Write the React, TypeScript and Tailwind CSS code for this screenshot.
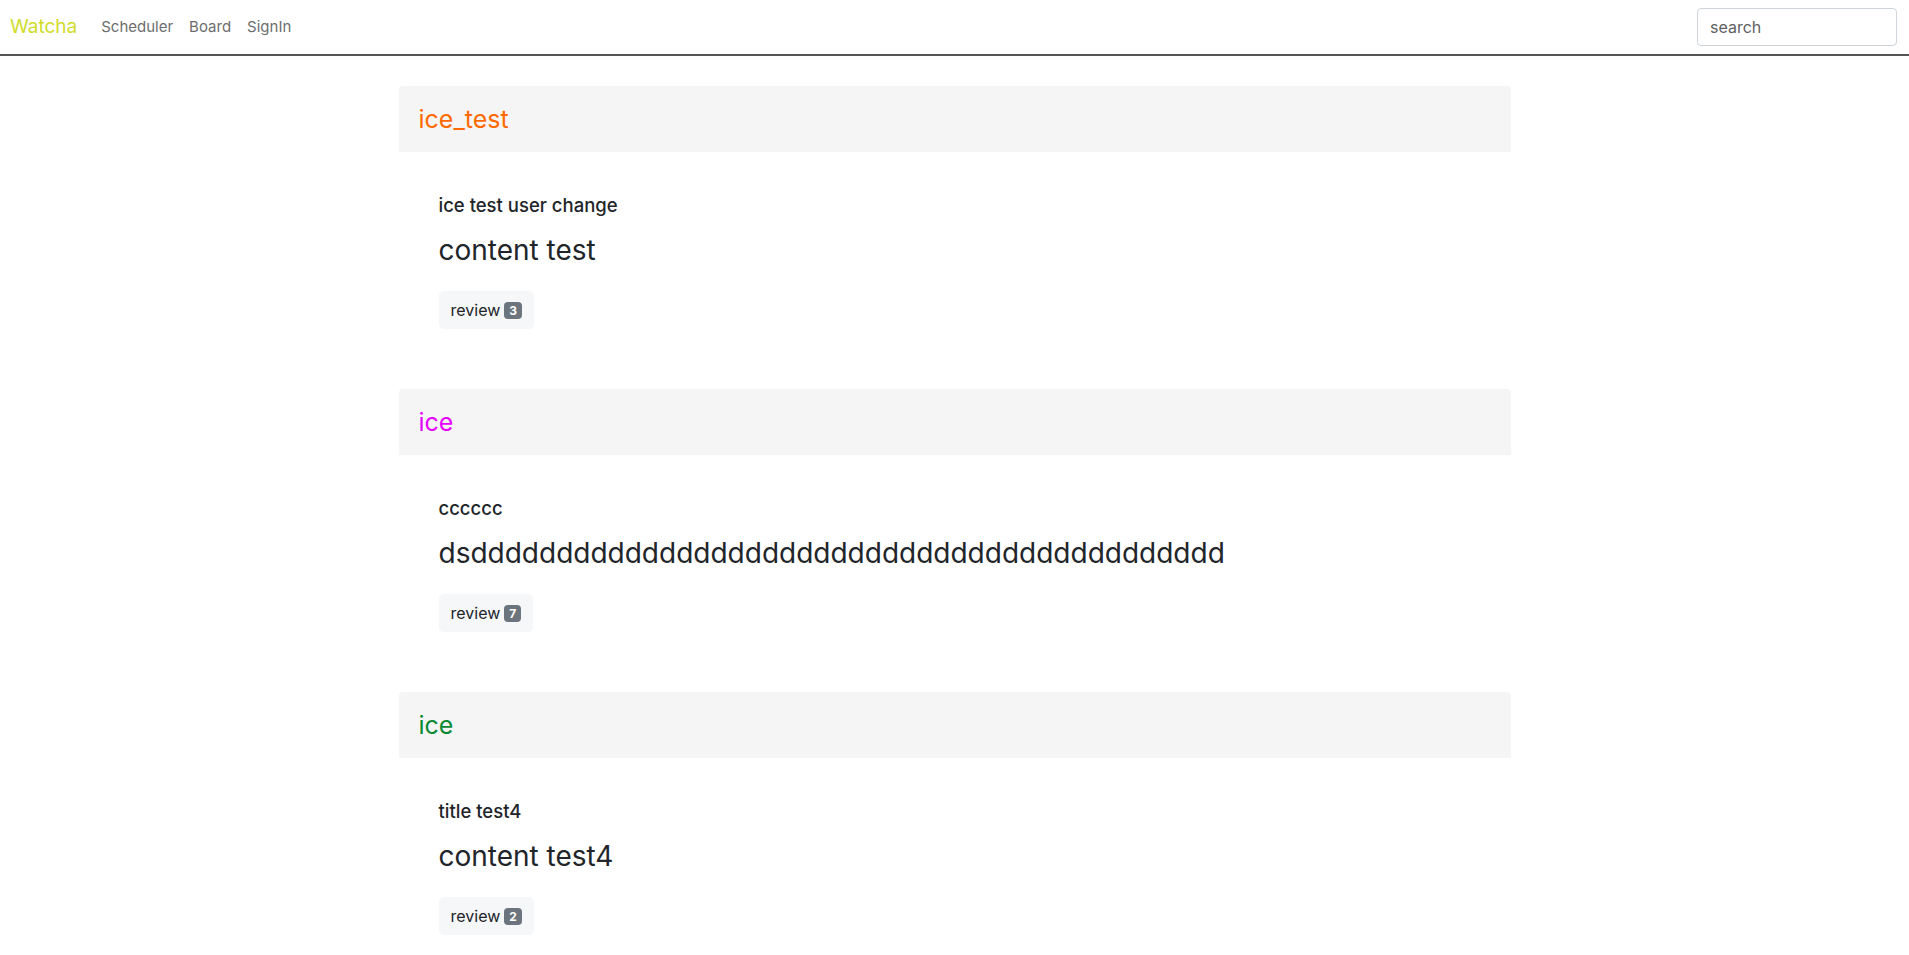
import React from 'react';

const posts = [
  { tag: 'ice_test', color: 'text-[#ff6a00]', title: 'ice test user change', content: 'content test', reviews: 3 },
  { tag: 'ice', color: 'text-[#e600ff]', title: 'cccccc', content: 'dsdddddddddddddddddddddddddddddddddddddddddddd', reviews: 7 },
  { tag: 'ice', color: 'text-[#0a8a32]', title: 'title test4', content: 'content test4', reviews: 2 },
];

const App = () => {
  return (
    <div className="min-h-screen bg-white font-['Inter',sans-serif] text-[#212529]">
      {/* Navbar */}
      <nav className="h-[56px] flex items-center justify-between pl-[10px] pr-[12px] border-b-2 border-[#555]">
        <div className="flex items-center">
          <span className="text-[19px] text-[#cfdc2b] mr-[24px]">Watcha</span>
          <div className="flex items-center gap-[16px] text-[15px] text-[#6d6d6d]">
            <span>Scheduler</span>
            <span>Board</span>
            <span>SignIn</span>
          </div>
        </div>
        <input
          placeholder="search"
          className="w-[200px] h-[38px] px-[12px] text-[16px] border border-[#ced4da] rounded-[4px] placeholder:text-[#5f5f5f] outline-none"
        />
      </nav>

      {/* Posts */}
      <main className="w-[1112px] mx-auto pt-[30px]">
        {posts.map((p, i) => (
          <section key={i} className="mb-[60px]">
            <div className={`h-[66px] bg-[#f5f5f5] rounded-t-[4px] flex items-center px-[20px] pt-[2px] text-[25px] ${p.color}`}>
              {p.tag}
            </div>
            <div className="pl-[40px] pt-[42px]">
              <h5 className="text-[18.5px] font-medium leading-[22px]">{p.title}</h5>
              <p className="text-[28px] leading-[32px] mt-[18px]">{p.content}</p>
              <button className="mt-[25px] h-[38px] px-[12px] bg-[#f6f7f9] rounded-[5px] flex items-center gap-[4px] text-[16px] text-[#212529]">
                review
                <span className="bg-[#6c757d] text-white text-[12px] font-bold rounded-[4px] px-[5px] leading-[17px]">{p.reviews}</span>
              </button>
            </div>
          </section>
        ))}
      </main>
    </div>
  );
};

export default App;
